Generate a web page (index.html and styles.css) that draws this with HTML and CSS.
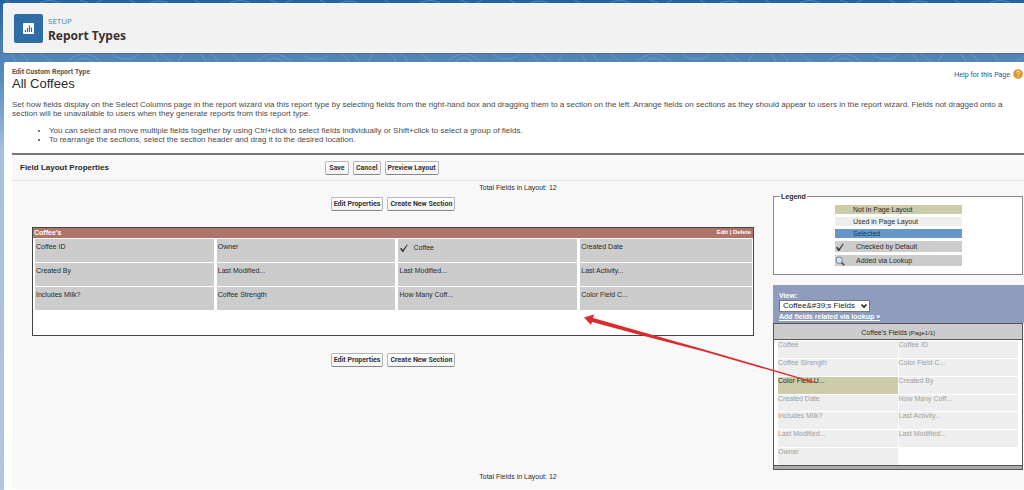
FILE: index.html
```html
<!DOCTYPE html>
<html lang="en">
<head>
<meta charset="utf-8">
<title>Report Types</title>
<link rel="stylesheet" href="styles.css">
</head>
<body>
<svg class="backdrop" aria-hidden="true" width="100%" height="100%">
  <defs>
    <pattern id="contours" width="190" height="64" patternUnits="userSpaceOnUse">
      <g fill="none" stroke="#8fb6de" stroke-opacity=".4" stroke-width="1">
        <path d="M8 53q6 2 8 10M20 53q6 3 9 10M40 53q5 4 12 10M66 63q8-9 18-9t18 9M74 63q4-5 10-5t10 5M112 53q4 6 14 6t14-6M150 53q6 4 10 10M160 53q6 4 12 10M184 53q-4 4-6 10"/>
        <path d="M5 0l6 4M40 3q10-5 20 0M80 0l8 3M96 3l6-3M130 0l5 3M150 3q10-4 18 0"/>
      </g>
    </pattern>
  </defs>
  <rect width="100%" height="100%" fill="url(#contours)"/>
</svg>
<header class="page-header">
  <svg class="page-icon" viewBox="0 0 29 29" aria-hidden="true">
    <rect width="29" height="29" rx="2" fill="#2f6ea5"/>
    <rect x="9" y="9" width="11" height="11" rx="1" fill="#fff"/>
    <path d="M11.500 18v-2M13.500 18v-4M15.500 18v-6.500M17.500 18v-4.500" stroke="#2f6ea5" stroke-width="1.200"/>
  </svg>
  <div>
    <div class="eyebrow">SETUP</div>
    <h1>Report Types</h1>
  </div>
</header>
<main class="card">
  <div class="title-row">
    <div>
      <div class="kicker">Edit Custom Report Type</div>
      <h2>All Coffees</h2>
    </div>
    <a class="help" href="#help"><span>Help for this Page</span>
      <svg viewBox="0 0 10 10" aria-hidden="true"><circle cx="5" cy="5" r="4.800" fill="#dc962c"/><path d="M3.500 3.600q.2-1.500 1.700-1.500 1.500.1 1.400 1.400-.1.900-1.500 1.700v.9M5.100 7v1" fill="none" stroke="#fff2d8" stroke-width="1"/></svg>
    </a>
  </div>
  <p class="intro">Set how fields display on the Select Columns page in the report wizard via this report type by selecting fields from the right-hand box and dragging them to a section on the left. Arrange fields on sections as they should appear to users in the report wizard. Fields not dragged onto a section will be unavailable to users when they generate reports from this report type.</p>
  <ul class="tips">
    <li>You can select and move multiple fields together by using Ctrl+click to select fields individually or Shift+click to select a group of fields.</li>
    <li>To rearrange the sections, select the section header and drag it to the desired location.</li>
  </ul>
  <section class="editor">
    <div class="editor-head">
      <h3>Field Layout Properties</h3>
      <div class="buttons"><button>Save</button><button>Cancel</button><button>Preview Layout</button></div>
    </div>
    <div class="total">Total Fields in Layout: 12</div>
    <div class="columns">
      <div class="layout">
        <div class="buttons section-actions"><button>Edit Properties</button><button>Create New Section</button></div>
        <div class="section">
          <div class="section-head"><strong>Coffee's</strong><span><a href="#edit">Edit</a> | <a href="#delete">Delete</a></span></div>
          <ul class="fields">
            <li>Coffee ID</li><li>Owner</li>
            <li class="with-icon"><svg class="mark" viewBox="0 0 10 10" aria-hidden="true"><path d="M1 5.500l1.600-.6L3.800 7 8 1.500l.8.2L4.200 9H3.300z" fill="#333"/></svg>Coffee</li>
            <li>Created Date</li>
            <li>Created By</li><li>Last Modified...</li><li>Last Modified...</li><li>Last Activity...</li>
            <li>Includes Milk?</li><li>Coffee Strength</li><li>How Many Coff...</li><li>Color Field C...</li>
          </ul>
        </div>
        <div class="buttons section-actions"><button>Edit Properties</button><button>Create New Section</button></div>
      </div>
      <aside class="side">
        <fieldset class="legend">
          <legend>Legend</legend>
          <ul>
            <li class="unused">Not in Page Layout</li>
            <li class="used">Used in Page Layout</li>
            <li class="selected">Selected</li>
            <li class="tall"><svg class="mark" viewBox="0 0 10 10" aria-hidden="true"><path d="M1 5.500l1.600-.6L3.800 7 8 1.500l.8.2L4.200 9H3.300z" fill="#333"/></svg>Checked by Default</li>
            <li class="tall"><svg class="mark" viewBox="0 0 10 10" aria-hidden="true"><path d="M6.400 6.400L9.300 9.300" stroke="#555" stroke-width="1.800"/><circle cx="4.200" cy="4.200" r="3.200" fill="#d4e6f5" stroke="#6b7f94" stroke-width="1"/></svg>Added via Lookup</li>
          </ul>
        </fieldset>
        <div class="view">
          <label for="view">View:</label>
          <div class="picker">
            <select id="view"><option>Coffee&amp;#39;s Fields</option></select>
            <svg viewBox="0 0 8 6" aria-hidden="true"><path d="M1.500 1.500L4 4l2.500-2.500" fill="none" stroke="#222" stroke-width="1.600"/></svg>
          </div>
          <a href="#lookup">Add fields related via lookup »</a>
        </div>
        <div class="palette">
          <div class="palette-head">Coffee's Fields <small>[Page1/1]</small></div>
          <ul>
            <li>Coffee</li><li>Coffee ID</li>
            <li>Coffee Strength</li><li>Color Field C...</li>
            <li class="available">Color Field U...</li><li>Created By</li>
            <li>Created Date</li><li>How Many Coff...</li>
            <li>Includes Milk?</li><li>Last Activity...</li>
            <li>Last Modified...</li><li>Last Modified...</li>
            <li>Owner</li>
          </ul>
          <div class="palette-foot"></div>
        </div>
        <svg class="arrow" viewBox="0 0 232 68" aria-hidden="true"><path d="M0 1.500L10-1.500 9 2 60 16.500 120 33.500 231 66 230 67 120 35.500 60 20 8 6 7 9z" fill="#dc2b2e"/></svg>
      </aside>
    </div>
    <div class="total">Total Fields in Layout: 12</div>
  </section>
</main>
</body>
</html>
```
FILE: styles.css
```css
* { box-sizing: border-box; }
body {
  margin: 0;
  padding: 3px 0 0 3px;
  min-height: 100vh;
  display: flex;
  flex-direction: column;
  overflow: hidden;
  font: 7px/9px "Liberation Sans", Arial, sans-serif;
  color: #2a2a2a;
  background: linear-gradient(#2363a0 0, #5083b5 52px, #5a8bbd 80px, #a5bfdc 150px, #b0c7e0 100%);
}
h1, h2, h3, p, ul { margin: 0; padding: 0; }
ul { list-style: none; }
.backdrop { position: absolute; inset: 0; z-index: -1; height: 64px; }

.page-header {
  display: flex;
  gap: 5px;
  height: 50px;
  padding: 11px 11px;
  background: #f3f2f2;
  border-radius: 2px 0 0 2px;
  box-shadow: 0 1px 1px #4c6f96;
  margin-bottom: 9px;
}
.page-icon { width: 29px; height: 29px; }
.eyebrow { font: 8px/13px "Open Sans", sans-serif; color: #4a7dac; }
h1 { font: 700 12px/18px "Noto Sans", sans-serif; color: #3e3230; }

.card {
  flex: 1;
  padding: 6px 0 0 8px;
  margin-left: 1px;
  background: #fff;
  border-radius: 2px 0 0 0;
}
.title-row { display: flex; justify-content: space-between; align-items: flex-start; }
.kicker { font: 700 7px/9px Roboto, sans-serif; color: #555; }
h2 { font-weight: 400; font-size: 13px; line-height: 13px; }
.help { display: flex; align-items: flex-start; gap: 3px; margin-right: 1px; font: 7px/11px Roboto, sans-serif; color: #2b5590; text-decoration: none; }
.help span { padding-top: 2px; }
.help svg { width: 10px; height: 10px; margin-top: 1px; }
.intro { margin-top: 10px; font-size: 8px; color: #4a4a4a; }
.tips { margin-top: 8px; padding-left: 37px; font-size: 8px; color: #4a4a4a; list-style: disc; }

.editor { margin-top: 9px; background: #f8f8f8; border-top: 2px solid #75757f; min-height: 336px; }
.editor-head { display: grid; grid-template-columns: 313px 1fr; align-items: center; height: 26px; border-bottom: 1px solid #e6e6e6; }
h3 { padding-left: 8px; font-size: 8px; line-height: 10px; }
.buttons { display: flex; gap: 4px; }
button {
  height: 14px;
  min-width: 24px;
  padding: 0 2px;
  font: 700 7px/10px Roboto, sans-serif;
  color: #333;
  background: linear-gradient(#fff, #f3f3f3);
  border: 1px solid #b5b5b5;
  border-bottom-color: #888;
  border-radius: 2px;
}
.total { text-align: center; line-height: 9px; padding-top: 2px; }
.columns { display: grid; grid-template-columns: 1fr 251px; min-height: 276px; }
.layout { padding: 5px 19px 0 20px; }
.section-actions { justify-content: center; }
.section { margin: 16px 0 17px; height: 109px; background: #fff; border: 1px solid #444; }
.section-head {
  display: flex;
  justify-content: space-between;
  height: 10px;
  padding: 0 2px 0 1px;
  background: #b07368;
  color: #fff;
}
.section-head span { font-size: 6px; line-height: 8px; font-weight: 700; }
.section-head a { color: inherit; text-decoration: none; }
.fields { display: grid; grid-template-columns: 179fr 179fr 179fr 172fr; gap: 1px 3px; padding: 1px 1px 0 2px; }
.fields li { height: 23px; padding: 3px 1px; background: #ccc; }
.fields .with-icon { display: flex; align-items: flex-start; gap: 4px; padding-top: 4px; }
.mark { width: 10px; height: 10px; flex: none; }

.side { position: relative; }
.legend { margin: 0 1px 0 0; padding: 4px 60px 8px 61px; border: 1px solid #888; background: #fff; }
.legend legend { margin-left: -55px; padding: 0 1px; font-weight: 700; line-height: 9px; background: linear-gradient(#f8f8f8 5px, #fff 5px); }
.legend ul { display: grid; gap: 3px; }
.legend li { padding-left: 18px; }
.unused, .palette .available { background: #ccccaa; color: #2a2a2a; }
.used { background: #eee; }
.selected { background: #6797c8; color: #123a66; }
.legend .tall { display: flex; align-items: center; gap: 11px; height: 11px; padding-left: 0; background: #ccc; }
.view { display: flex; flex-direction: column; align-items: flex-start; margin-top: 10px; padding: 6px 6px 2px; background: #8e9dbe; font-weight: 700; color: #fff; }
.view a { color: #fff; }
.picker { position: relative; }
.picker svg { position: absolute; right: 2px; top: 3px; width: 8px; height: 6px; pointer-events: none; }
select { display: block; appearance: none; height: 12px; width: 91px; padding: 0 3px; font: 8px/10px "Liberation Sans", Arial, sans-serif; color: #222; background: #fff; border: 1px solid #777; border-radius: 0; }
.palette { margin-right: 1px; border: 1px solid #555; background: #fff; }
.palette-head { height: 16px; padding-top: 4px; text-align: center; background: #ccc; border-bottom: 1px solid #555; }
.palette-head small { font-size: 6px; }
.palette ul { display: grid; grid-template-columns: 1fr 1fr; grid-template-rows: repeat(7, 1fr); gap: 1px; height: 125px; padding: 1px 4px 0; }
.palette .available { color: #2a2a2a; }
.palette li { background: #eee; color: #a0a0a0; line-height: 8px; }
.palette li.available { background: #ccccaa; color: #2a2a2a; }
.palette-foot { height: 4px; border-top: 1px solid #555; background: #aaa; }
.arrow { position: absolute; left: -189px; top: 124px; width: 232px; height: 68px; overflow: visible; }
```
